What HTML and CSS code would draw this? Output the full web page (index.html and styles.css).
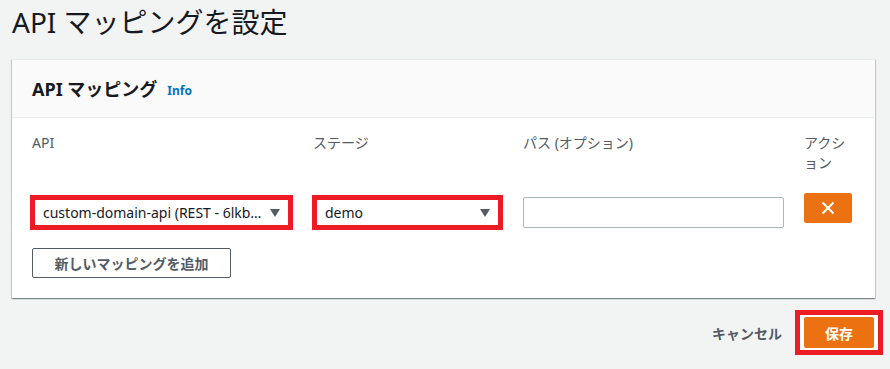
FILE: index.html
```html
<!DOCTYPE html>
<html lang="ja">
<head>
  <meta charset="UTF-8">
  <meta name="viewport" content="width=device-width, initial-scale=1.0">
  <title>API マッピングを設定</title>

  <link rel="stylesheet" href="styles.css">
</head>
<body>

<div class="page">
  <h1 class="page-title">API マッピングを設定</h1>

  <div class="card">
    <div class="card-header">
      <h2 class="card-title">API マッピング</h2>
      <a class="info-link" href="#">Info</a>
    </div>

    <div class="card-body">
      <div class="mapping-grid">
        <div class="field-label">API</div>
        <div class="field-label">ステージ</div>
        <div class="field-label">パス (オプション)</div>
        <div class="field-label">アクション</div>

        <div class="select select-api marked">
          <span class="select-value">custom-domain-api (REST - 6lkb…</span>
          <span class="caret"></span>
        </div>
        <div class="select select-stage marked">
          <span class="select-value">demo</span>
          <span class="caret"></span>
        </div>
        <input class="path-input" type="text">
        <button class="remove-button" aria-label="削除">
          <svg width="14" height="14" viewBox="0 0 14 14">
            <path d="M1.5 1.5 L12.5 12.5 M12.5 1.5 L1.5 12.5" stroke="#fff" stroke-width="2" fill="none"/>
          </svg>
        </button>
      </div>

      <button class="add-button">新しいマッピングを追加</button>
    </div>
  </div>

  <div class="footer">
    <button class="cancel-button">キャンセル</button>
    <div class="save-frame">
      <button class="save-button">保存</button>
    </div>
  </div>
</div>

</body>
</html>
```

FILE: styles.css
```css
body {
  margin: 0;
  background-color: #f2f3f3;
  font-family: "Noto Sans", "Noto Sans CJK JP", sans-serif;
  font-size: 14px;
  color: #16191f;
}

.page {
  padding: 4px 15px 0 12px;
}

.page-title {
  margin: 0 0 19px;
  font-size: 28px;
  line-height: 36px;
  font-weight: 400;
  color: #16191f;
}

.card {
  background-color: #fff;
  border-top: 1px solid #eaeded;
  box-shadow: 0 1px 1px 0 rgba(0, 28, 36, 0.3), 1px 1px 1px 0 rgba(0, 28, 36, 0.15), -1px 1px 1px 0 rgba(0, 28, 36, 0.15);
}

.card-header {
  display: flex;
  align-items: center;
  height: 57px;
  padding: 0 20px;
  background-color: #fafafa;
  border-bottom: 1px solid #eaeded;
}

.card-title {
  margin: 0;
  font-size: 18px;
  line-height: 24px;
  font-weight: 700;
}

.info-link {
  margin-left: 10px;
  margin-top: 3px;
  font-size: 12px;
  font-weight: 700;
  color: #0073bb;
  text-decoration: none;
}

.card-body {
  padding: 15px 20px 20px;
}

.mapping-grid {
  display: grid;
  grid-template-columns: 261px 190px 261px 48px;
  column-gap: 20px;
  row-gap: 20px;
  align-items: start;
}

.field-label {
  line-height: 20px;
  color: #545b64;
}

.select {
  display: flex;
  align-items: center;
  justify-content: space-between;
  box-sizing: border-box;
  height: 35px;
  margin-top: 2px;
  padding: 0 8px;
  background-color: #fff;
  border: 1px solid #aab7b8;
}

.select.marked {
  border: 5px solid #ed1c24;
}

.select-api {
  width: 263px;
  margin-left: -2px;
}

.select-stage {
  width: 191px;
  margin-left: -1px;
}

.select-value {
  overflow: hidden;
  white-space: nowrap;
  text-overflow: ellipsis;
  color: #16191f;
}

.caret {
  flex: none;
  width: 0;
  height: 0;
  margin-left: 6px;
  border-left: 5.5px solid transparent;
  border-right: 5.5px solid transparent;
  border-top: 8px solid #545b64;
}

.path-input {
  box-sizing: border-box;
  width: 100%;
  height: 31px;
  margin: 4px 0 0;
  border: 1px solid #aab7b8;
  border-radius: 2px;
  background-color: #fff;
}

.remove-button {
  display: flex;
  align-items: center;
  justify-content: center;
  width: 48px;
  height: 30px;
  padding: 0;
  border: none;
  border-radius: 2px;
  background-color: #ec7211;
  cursor: pointer;
}

.add-button {
  display: block;
  margin-top: 18px;
  width: 199px;
  height: 30px;
  padding: 0;
  background-color: #fff;
  border: 1px solid #545b64;
  border-radius: 2px;
  font-family: inherit;
  font-size: 14px;
  font-weight: 700;
  color: #545b64;
  cursor: pointer;
}

.footer {
  display: flex;
  justify-content: flex-end;
  align-items: center;
  margin-top: 12px;
  margin-right: -8px;
}

.cancel-button {
  margin-right: 13px;
  padding: 0;
  border: none;
  background: transparent;
  font-family: inherit;
  font-size: 14px;
  font-weight: 700;
  color: #545b64;
  cursor: pointer;
}

.save-frame {
  padding: 2px 4px;
  background-color: #fff;
  border: 5px solid #ed1c24;
}

.save-button {
  display: block;
  width: 70px;
  height: 31px;
  padding: 0;
  border: none;
  border-radius: 2px;
  background-color: #ec7211;
  font-family: inherit;
  font-size: 14px;
  font-weight: 700;
  color: #fff;
  cursor: pointer;
}
```
